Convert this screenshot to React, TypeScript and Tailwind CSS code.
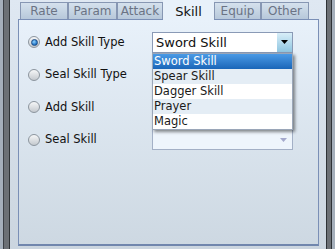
import React from "react";

const tabs = [
	{ label: "Rate", w: "w-[48px]" },
	{ label: "Param", w: "w-[49px]" },
	{ label: "Attack", w: "w-[46px]" },
	{ label: "Skill", w: "w-[51px]", active: true },
	{ label: "Equip", w: "w-[47px]" },
	{ label: "Other", w: "w-[48px]" },
];

const skillTypes = ["Sword Skill", "Spear Skill", "Dagger Skill", "Prayer", "Magic"];

function Radio({ checked }: { checked?: boolean }) {
	return (
		<span className="w-[12px] h-[12px] rounded-full border border-[#8c959e] bg-gradient-to-b from-[#f6f7f8] to-[#c4c9ce] flex items-center justify-center shrink-0">
			{checked && (
				<span className="w-[7px] h-[7px] rounded-full bg-[radial-gradient(circle_at_40%_35%,#8fd4ff,#1a6cc0_70%)] border border-[#1f4f86]" />
			)}
		</span>
	);
}

function Arrow({ color }: { color: string }) {
	return (
		<svg width="7" height="4" viewBox="0 0 7 4">
			<path d="M0 0h7L3.5 4z" fill={color} />
		</svg>
	);
}

function Combo({ value, open }: { value?: string; open?: boolean }) {
	if (!open) {
		return (
			<div className="w-[141px] h-[21px] border border-[#a3b0c6] bg-[#eef5fc] flex items-center justify-end pr-[5px]">
				<Arrow color="#a4a9cc" />
			</div>
		);
	}
	return (
		<div className="relative w-[141px] h-[21px]">
			<div className="h-full border border-[#8a9ab6] bg-white flex items-center">
				<span className="flex-1 pl-[3px] text-[13px] text-[#111]">{value}</span>
				<span className="w-[15px] h-full bg-gradient-to-b from-[#d8eef8] to-[#8ec5e0] flex items-center justify-center">
					<Arrow color="#000" />
				</span>
			</div>
			<ul className="absolute left-0 top-[21px] w-[141px] border border-[#9aa6b8] bg-white shadow-[2px_2px_3px_rgba(0,0,0,0.45)] z-20">
				{skillTypes.map((s, i) => (
					<li
						key={s}
						className={
							"h-[15px] pl-[1px] text-[11.5px] leading-[15px] " +
							(i === 0
								? "bg-gradient-to-b from-[#4a9ae6] to-[#1a66b8] text-white"
								: i % 2 === 1
									? "bg-[#e4edf5] text-[#1a1a1a]"
									: "bg-white text-[#1a1a1a]")
						}
					>
						{s}
					</li>
				))}
			</ul>
		</div>
	);
}

export default function App() {
	const rows = [
		{ label: "Add Skill Type", checked: true, open: true },
		{ label: "Seal Skill Type" },
		{ label: "Add Skill" },
		{ label: "Seal Skill" },
	];
	return (
		<div className="w-[335px] h-[249px] flex bg-gradient-to-b from-[#dfe8f2] to-[#cbd5df] font-['DejaVu_Sans','Liberation_Sans',sans-serif] overflow-hidden">
			{/* window frame, left */}
			<div className="flex h-full">
				<div className="w-[3px] bg-[#a5afbb]" />
				<div className="w-px bg-[#3c4046]" />
				<div className="w-[5px] bg-[#6c7075]" />
				<div className="w-px bg-[#2e3236]" />
			</div>

			<div className="w-[316px] pl-[8px] flex flex-col">
				<div className="h-[19px] flex items-end pl-[2px]">
					{tabs.map((t) =>
						t.active ? (
							<div
								key={t.label}
								className={`${t.w} h-[20px] -mb-px relative z-10 bg-[#e8f1fa] flex items-start justify-center pt-[2px] text-[13px] text-[#111]`}
							>
								{t.label}
							</div>
						) : (
							<div
								key={t.label}
								className={`${t.w} h-[17px] border border-b-0 border-[#8797b3] bg-gradient-to-b from-[#d5e1ed] to-[#b7c8da] flex items-center justify-center text-[12px] text-[#6b7384]`}
							>
								{t.label}
							</div>
						),
					)}
				</div>

				<div className="w-[301px] h-[227px] border border-[#7a8fb6] border-b-2 border-b-[#7086ad] bg-gradient-to-b from-[#e8f1fa] to-[#cdd8e2] pl-[9px] pt-[6px]">
					{rows.map((r) => (
						<div key={r.label} className="h-[32.5px] flex items-center">
							<div className="w-[124px] flex items-center gap-[5px] text-[11.5px] text-[#111]">
								<Radio checked={r.checked} />
								<span>{r.label}</span>
							</div>
							<Combo value="Sword Skill" open={r.open} />
						</div>
					))}
				</div>
			</div>

			{/* window frame, right */}
			<div className="flex h-full ml-auto">
				<div className="w-px bg-[#2e3236]" />
				<div className="w-[4px] bg-[#6c7075]" />
				<div className="w-px bg-[#2e3236]" />
				<div className="w-[3px] bg-[#a5afbb]" />
			</div>
		</div>
	);
}
